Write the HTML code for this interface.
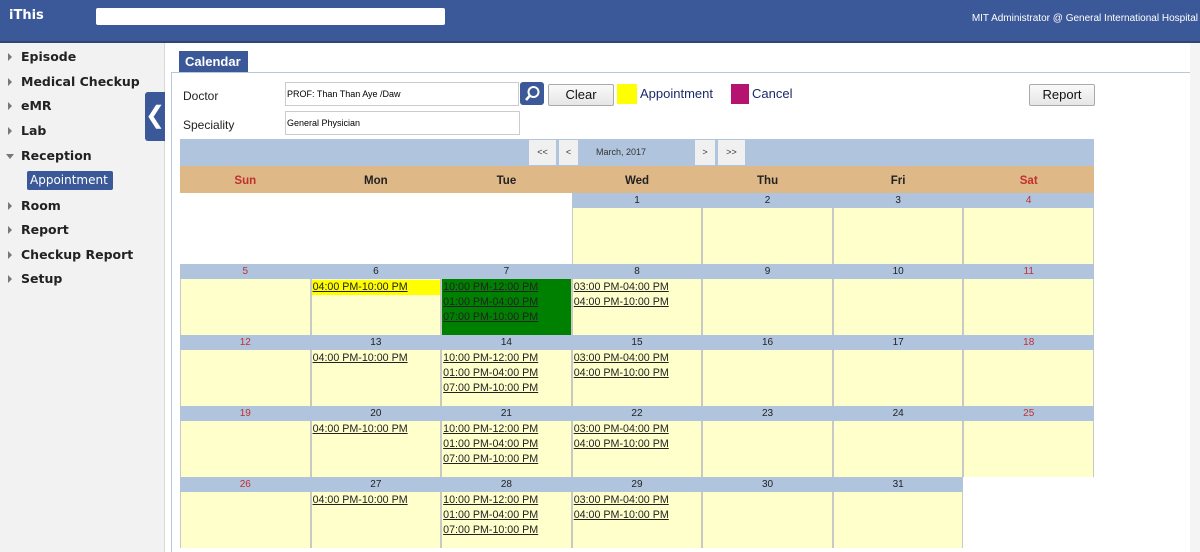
<!DOCTYPE html>
<html><head><meta charset="utf-8"><style>
*{box-sizing:border-box;margin:0;padding:0}
body{width:1200px;height:552px;overflow:hidden;background:#fff;font-family:"Liberation Sans",Arial,sans-serif;position:relative}
.hdr{position:absolute;left:0;top:0;width:1200px;height:43px;background:#3b5998;border-bottom:2px solid #2e4676}
.hdr .t{position:absolute;left:9px;top:8px;color:#fff;font-weight:bold;font-size:13px;font-family:"DejaVu Sans",sans-serif}
.hdr .s{position:absolute;left:96px;top:8px;width:349px;height:17px;background:#fff;border-radius:2px}
.hdr .u{position:absolute;right:2px;top:13px;color:#fff;font-size:10px}
.side{position:absolute;left:0;top:43px;width:165px;height:509px;background:#f2f2f2;border-right:1px solid #d8d8d8}
.side div{position:absolute;left:21px;font-family:"DejaVu Sans",sans-serif;font-weight:bold;font-size:12.5px;color:#222}
.side div:before{content:"";position:absolute;left:-13px;top:4px;border-left:4px solid #777;border-top:4px solid transparent;border-bottom:4px solid transparent}
.side div.open:before{left:-15px;top:6px;border-top:5px solid #777;border-left:4px solid transparent;border-right:4px solid transparent;border-bottom:0}
.side .ap{position:absolute;left:27px;top:128px;width:86px;height:19px;background:#3b5998;border-radius:2px;color:#fff;font-size:12px;font-family:"DejaVu Sans",sans-serif;padding:2px 0 0 3px;white-space:nowrap;overflow:hidden}
.col{position:absolute;left:145px;top:92px;width:20px;height:49px;background:#3b5998;border-radius:3px 0 0 3px;color:#fff;font-size:24px;text-align:center;line-height:47px}
.tab{position:absolute;left:179px;top:51px;width:69px;height:21px;background:#3b5998;color:#fff;font-weight:bold;font-size:13px;padding:3px 0 0 6px}
.pl{position:absolute;left:171px;top:72px;width:1019px;height:480px;border-top:1px solid #b8c8dc;border-left:1px solid #b8c8dc}
.sb{position:absolute;left:1190px;top:43px;width:10px;height:509px;background:#f4f4f4}
.lbl{position:absolute;font-size:12px;color:#222}
.inp{position:absolute;border:1px solid #ccc;background:#fff;font-size:9px;padding:6px 0 0 1px}
.btn{position:absolute;border:1px solid #aaa;border-radius:2px;background:linear-gradient(#fafafa,#e6e6e6);font-size:13px;text-align:center;color:#111}
.cal{position:absolute;left:180px;top:139px;width:914px}
.nav{height:27px;background:#b0c4de;position:relative}
.nb{position:absolute;top:1px;height:25px;background:#f0f0f0;font-size:9px;text-align:center;line-height:25px;color:#333}
.dh{height:27px;background:#deb887;display:grid;grid-template-columns:repeat(7,1fr);font-weight:bold;font-size:11.5px;text-align:center;line-height:30px;color:#222}
.wk{display:grid;grid-template-columns:repeat(7,1fr);grid-template-rows:15px 56px}
.n{background:#b0c4de;font-size:10px;text-align:center;line-height:15px;color:#222}
.r{color:#c03030}
.b{background:#ffffcc;border:1px solid #c8c8c4;border-top:0;border-bottom:0;font-size:10.7px;padding-top:1px}
.b a{display:block;height:15px;line-height:15px;color:#222;text-decoration:underline;padding-left:1px}
.w{background:#fff}
</style></head><body>
<div class="hdr"><div class="t">iThis</div><div class="s"></div><div class="u">MIT Administrator @ General International Hospital</div></div>
<div class="side">
<div style="top:6px">Episode</div>
<div style="top:31px">Medical Checkup</div>
<div style="top:55px">eMR</div>
<div style="top:80px">Lab</div>
<div class="open" style="top:105px">Reception</div>
<span class="ap">Appointment</span>
<div style="top:155px">Room</div>
<div style="top:179px">Report</div>
<div style="top:204px">Checkup Report</div>
<div style="top:228px">Setup</div>
</div>
<div class="col">&#10094;</div>
<div class="sb"></div>
<div class="pl"></div>
<div class="tab">Calendar</div>
<div class="lbl" style="left:183px;top:89px">Doctor</div>
<div class="lbl" style="left:183px;top:118px">Speciality</div>
<div class="inp" style="left:285px;top:82px;width:234px;height:24px">PROF: Than Than Aye /Daw</div>
<div class="inp" style="left:285px;top:111px;width:235px;height:24px">General Physician</div>
<div style="position:absolute;left:520px;top:82px;width:24px;height:23px;background:#3b5998;border-radius:3px"><svg width="24" height="23"><circle cx="13.5" cy="10" r="5" stroke="#fff" stroke-width="2" fill="none"/><line x1="10" y1="13.5" x2="6" y2="18" stroke="#fff" stroke-width="2.5"/></svg></div>
<div class="btn" style="left:548px;top:84px;width:66px;height:22px;line-height:20px">Clear</div>
<div style="position:absolute;left:617px;top:84px;width:20px;height:20px;background:#ffff00"></div>
<div class="lbl" style="left:640px;top:86px;font-size:13px;color:#1a2a6a">Appointment</div>
<div style="position:absolute;left:731px;top:84px;width:18px;height:20px;background:#b5136f"></div>
<div class="lbl" style="left:752px;top:86px;font-size:13px;color:#1a2a6a">Cancel</div>
<div class="btn" style="left:1029px;top:84px;width:66px;height:22px;line-height:20px">Report</div>
<div class="cal">
<div class="nav"><div class="nb" style="left:349px;width:27px">&lt;&lt;</div><div class="nb" style="left:379px;width:19px">&lt;</div><div class="nb" style="left:398px;width:86px;background:#b0c4de">March, 2017</div><div class="nb" style="left:515px;width:20px">&gt;</div><div class="nb" style="left:538px;width:27px">&gt;&gt;</div></div>
<div class="dh"><span class="r">Sun</span><span>Mon</span><span>Tue</span><span>Wed</span><span>Thu</span><span>Fri</span><span class="r">Sat</span></div>
<div class="wk">
<div class="n w"></div><div class="n w"></div><div class="n w"></div><div class="n">1</div><div class="n">2</div><div class="n">3</div><div class="n r">4</div>
<div class="w"></div><div class="w"></div><div class="w"></div><div class="b"></div><div class="b"></div><div class="b"></div><div class="b"></div>
</div>
<div class="wk">
<div class="n r">5</div><div class="n">6</div><div class="n">7</div><div class="n">8</div><div class="n">9</div><div class="n">10</div><div class="n r">11</div>
<div class="b"></div><div class="b"><a style="background:#ffff00">04:00 PM-10:00 PM</a></div><div class="b" style="background:#008000"><a>10:00 PM-12:00 PM</a><a>01:00 PM-04:00 PM</a><a>07:00 PM-10:00 PM</a></div><div class="b"><a>03:00 PM-04:00 PM</a><a>04:00 PM-10:00 PM</a></div><div class="b"></div><div class="b"></div><div class="b"></div>
</div>
<div class="wk">
<div class="n r">12</div><div class="n">13</div><div class="n">14</div><div class="n">15</div><div class="n">16</div><div class="n">17</div><div class="n r">18</div>
<div class="b"></div><div class="b"><a>04:00 PM-10:00 PM</a></div><div class="b"><a>10:00 PM-12:00 PM</a><a>01:00 PM-04:00 PM</a><a>07:00 PM-10:00 PM</a></div><div class="b"><a>03:00 PM-04:00 PM</a><a>04:00 PM-10:00 PM</a></div><div class="b"></div><div class="b"></div><div class="b"></div>
</div>
<div class="wk">
<div class="n r">19</div><div class="n">20</div><div class="n">21</div><div class="n">22</div><div class="n">23</div><div class="n">24</div><div class="n r">25</div>
<div class="b"></div><div class="b"><a>04:00 PM-10:00 PM</a></div><div class="b"><a>10:00 PM-12:00 PM</a><a>01:00 PM-04:00 PM</a><a>07:00 PM-10:00 PM</a></div><div class="b"><a>03:00 PM-04:00 PM</a><a>04:00 PM-10:00 PM</a></div><div class="b"></div><div class="b"></div><div class="b"></div>
</div>
<div class="wk">
<div class="n r">26</div><div class="n">27</div><div class="n">28</div><div class="n">29</div><div class="n">30</div><div class="n">31</div><div class="n w"></div>
<div class="b"></div><div class="b"><a>04:00 PM-10:00 PM</a></div><div class="b"><a>10:00 PM-12:00 PM</a><a>01:00 PM-04:00 PM</a><a>07:00 PM-10:00 PM</a></div><div class="b"><a>03:00 PM-04:00 PM</a><a>04:00 PM-10:00 PM</a></div><div class="b"></div><div class="b"></div><div class="w"></div>
</div>
</div>
</body></html>
